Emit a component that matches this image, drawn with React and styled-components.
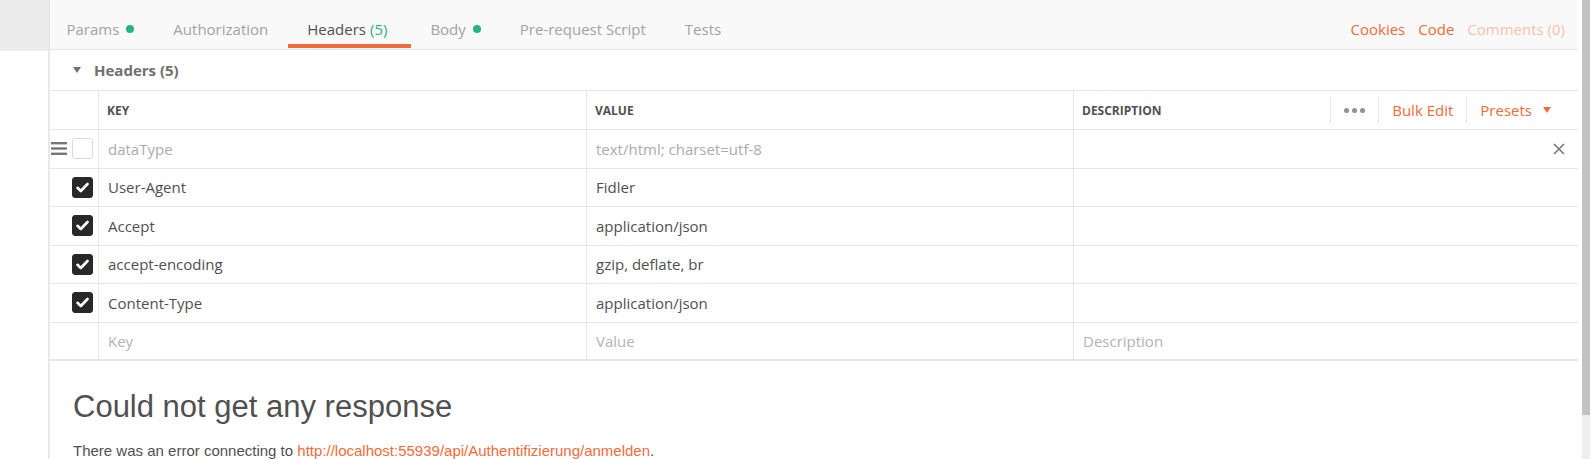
import React from 'react'
import styled, { createGlobalStyle } from 'styled-components'

const GlobalStyle = createGlobalStyle`
  html, body {
    margin: 0;
    padding: 0;
    background: #fff;
  }
  body {
    font-family: 'Open Sans', 'Noto Sans', sans-serif;
  }
  * {
    box-sizing: border-box;
  }
`

const Shell = styled.div`
  display: flex;
  width: 1593px;
  height: 459px;
  overflow: hidden;
  background: #fff;
`

const Sidebar = styled.div`
  display: flex;
  flex-direction: column;
  flex-shrink: 0;
  width: 48px;
`

const SidebarTop = styled.div`
  flex-shrink: 0;
  height: 51px;
  background: #ececec;
`

const Main = styled.div`
  display: flex;
  flex: 1;
  flex-direction: column;
  min-width: 0;
  overflow: hidden;
  border-left: 2px solid #e8e8e8;
`

const TabBar = styled.div`
  display: flex;
  flex-shrink: 0;
  justify-content: space-between;
  height: 50px;
  padding-right: 13px;
  background: #f9f9f9;
  border-bottom: 1px solid #e6e6e6;
`

const TabList = styled.div`
  display: flex;
  margin-left: -3px;
`

const Tab = styled.div`
  display: flex;
  align-items: center;
  margin-bottom: 1px;
  padding: 14px 19.5px 0;
  font-size: 15px;
  color: ${p => (p.$active ? '#505050' : '#a3a3a3')};
  border-bottom: 4px solid ${p => (p.$active ? '#f26b3a' : 'transparent')};
  white-space: nowrap;
`

const Count = styled.span`
  margin-left: 4px;
  margin-right: 4px;
  color: #26b47f;
`

const Dot = styled.span`
  width: 8px;
  height: 8px;
  margin-left: 7px;
  border-radius: 50%;
  background: #26b47f;
`

const RightLinks = styled.div`
  display: flex;
  align-items: center;
  gap: 13px;
  padding-top: 9px;
  font-size: 15px;
`

const Link = styled.span`
  color: ${p => (p.$faded ? '#f9c1aa' : '#f26b3a')};
`

const SectionTitle = styled.div`
  display: flex;
  flex-shrink: 0;
  align-items: center;
  gap: 13px;
  height: 40px;
  padding-left: 23px;
  font-size: 15px;
  font-weight: 700;
  color: #707070;
`

const Caret = styled.span`
  width: 0;
  height: 0;
  border-left: 4.5px solid transparent;
  border-right: 4.5px solid transparent;
  border-top: 6px solid ${p => p.$color || '#707070'};
`

const Table = styled.div`
  flex-shrink: 0;
  border-top: 1px solid #e6e6e6;
`

const Row = styled.div`
  display: grid;
  grid-template-columns: 48px 488px 487px 1fr;
  height: ${p => p.$height}px;
  border-bottom: ${p => (p.$last ? '2px' : '1px')} solid #e6e6e6;
`

const Cell = styled.div`
  display: flex;
  align-items: center;
  min-width: 0;
  padding-left: ${p => (p.$head ? 8 : 9)}px;
  border-left: 1px solid #e6e6e6;
  font-size: ${p => (p.$head ? '12px' : '15px')};
  font-weight: ${p => (p.$head ? 700 : 400)};
  text-transform: ${p => (p.$head ? 'uppercase' : 'none')};
  color: ${p => p.$color || '#505050'};
  white-space: nowrap;
`

const CheckCell = styled.div`
  display: flex;
  align-items: center;
  justify-content: flex-end;
  gap: 5px;
  padding-right: 5px;
`

const DescCell = styled(Cell)`
  justify-content: space-between;
  padding-right: 13px;
`

const HeadActions = styled.div`
  display: flex;
  align-items: center;
  padding-right: 1px;
`

const Action = styled.div`
  display: flex;
  align-items: center;
  gap: 11px;
  height: 26px;
  padding: 0 13px;
  border-left: 1px solid #e6e6e6;
  font-size: 15px;
  font-weight: 400;
  text-transform: none;
  color: #f26b3a;
`

const Dots = styled.span`
  display: flex;
  gap: 3px;

  i {
    width: 5px;
    height: 5px;
    border-radius: 50%;
    background: #909090;
  }
`

const Box = styled.span`
  display: flex;
  align-items: center;
  justify-content: center;
  width: 21px;
  height: 21px;
  border-radius: 3px;
  background: ${p => (p.$checked ? '#282828' : '#fff')};
  border: 1px solid ${p => (p.$checked ? '#282828' : '#d9d9d9')};
`

const Response = styled.div`
  flex-shrink: 0;
  padding: 27px 23px 0;
  font-family: 'Liberation Sans', Arial, sans-serif;
  color: #505050;
`

const Heading = styled.h1`
  margin: 0 0 15px;
  font-size: 31px;
  font-weight: 400;
  line-height: 38px;
`

const Message = styled.p`
  margin: 0;
  font-size: 15px;
  line-height: 20px;

  span {
    color: #f26b3a;
  }
`

const ScrollTrack = styled.div`
  display: flex;
  flex-direction: column;
  flex-shrink: 0;
  width: 15px;
  padding: 0 3px 0 4px;
`

const Thumb = styled.div`
  flex-shrink: 0;
  height: 415px;
  background: #c2c2c2;
`

const Track = styled.div`
  flex: 1;
  background: #efefef;
`

const Handle = () => (
  <svg width="16" height="13" viewBox="0 0 16 13">
    <rect x="0" y="0" width="16" height="2.4" fill="#777" />
    <rect x="0" y="5.3" width="16" height="2.4" fill="#777" />
    <rect x="0" y="10.6" width="16" height="2.4" fill="#777" />
  </svg>
)

const Check = ({ checked }) => (
  <Box $checked={checked}>
    {checked && (
      <svg width="13" height="11" viewBox="0 0 13 11">
        <path d="M1.5 5.8 L4.8 9 L11.5 2" fill="none" stroke="#fff" strokeWidth="2.6" strokeLinecap="round" strokeLinejoin="round" />
      </svg>
    )}
  </Box>
)

const Close = () => (
  <svg width="12" height="12" viewBox="0 0 12 12">
    <path d="M1 1 L11 11 M11 1 L1 11" stroke="#777" strokeWidth="1.6" />
  </svg>
)

const headers = [
  { key: 'User-Agent', value: 'Fidler' },
  { key: 'Accept', value: 'application/json' },
  { key: 'accept-encoding', value: 'gzip, deflate, br' },
  { key: 'Content-Type', value: 'application/json' },
]

const App = () => (
  <Shell>
    <GlobalStyle />
    <Sidebar>
      <SidebarTop />
    </Sidebar>
    <Main>
      <TabBar>
        <TabList>
          <Tab>Params<Dot /></Tab>
          <Tab>Authorization</Tab>
          <Tab $active>Headers<Count>(5)</Count></Tab>
          <Tab>Body<Dot /></Tab>
          <Tab>Pre-request Script</Tab>
          <Tab>Tests</Tab>
        </TabList>
        <RightLinks>
          <Link>Cookies</Link>
          <Link>Code</Link>
          <Link $faded>Comments (0)</Link>
        </RightLinks>
      </TabBar>

      <SectionTitle>
        <Caret />
        Headers (5)
      </SectionTitle>

      <Table>
        <Row $height={39}>
          <CheckCell />
          <Cell $head>Key</Cell>
          <Cell $head>Value</Cell>
          <DescCell $head>
            Description
            <HeadActions>
              <Action>
                <Dots><i /><i /><i /></Dots>
              </Action>
              <Action>Bulk Edit</Action>
              <Action>
                Presets
                <Caret $color="#f26b3a" />
              </Action>
            </HeadActions>
          </DescCell>
        </Row>
        <Row $height={38.5}>
          <CheckCell>
            <Handle />
            <Check />
          </CheckCell>
          <Cell $color="#ababab">dataType</Cell>
          <Cell $color="#ababab">text/html; charset=utf-8</Cell>
          <DescCell>
            <span />
            <Close />
          </DescCell>
        </Row>
        {headers.map(h => (
          <Row key={h.key} $height={38.5}>
            <CheckCell>
              <Check checked />
            </CheckCell>
            <Cell>{h.key}</Cell>
            <Cell>{h.value}</Cell>
            <Cell />
          </Row>
        ))}
        <Row $height={38.5} $last>
          <CheckCell />
          <Cell $color="#b3b3b3">Key</Cell>
          <Cell $color="#b3b3b3">Value</Cell>
          <Cell $color="#b3b3b3">Description</Cell>
        </Row>
      </Table>

      <Response>
        <Heading>Could not get any response</Heading>
        <Message>
          There was an error connecting to{' '}
          <span>http://localhost:55939/api/Authentifizierung/anmelden</span>.
        </Message>
      </Response>
    </Main>
    <ScrollTrack>
      <Thumb />
      <Track />
    </ScrollTrack>
  </Shell>
)

export default App
